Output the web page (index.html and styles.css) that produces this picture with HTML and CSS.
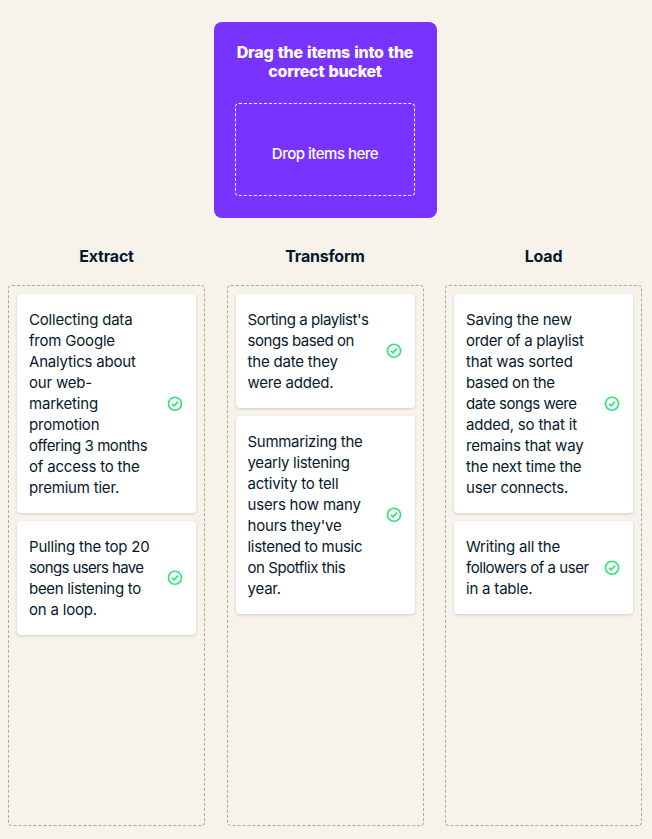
FILE: index.html
```html
<!DOCTYPE html>
<html lang="en">
<head>
<meta charset="utf-8">
<title>Drag and drop exercise</title>
<link rel="stylesheet" href="styles.css">
</head>
<body>
<svg class="sprite" aria-hidden="true">
  <symbol id="check" viewBox="0 0 16 16">
    <circle cx="8" cy="7.75" r="6.5" fill="none" stroke="currentColor" stroke-width="1.6"/>
    <path d="M5 7.8 7.1 9.8 11 5.7" fill="none" stroke="currentColor" stroke-width="1.8"/>
  </symbol>
</svg>
<main class="exercise">
  <section class="source">
    <h1 class="source-title">Drag the items into the<br>correct bucket</h1>
    <div class="source-drop">Drop items here</div>
  </section>
  <div class="buckets">
    <section class="bucket">
      <h2 class="bucket-title">Extract</h2>
      <div class="bucket-drop">
        <article class="card"><p>Collecting data<br>from Google<br>Analytics about<br>our web-<br>marketing<br>promotion<br><span class="tight">offering 3 months</span><br>of access to the<br>premium tier.</p><svg class="check"><use href="#check"/></svg></article>
        <article class="card"><p>Pulling the top 20<br><span class="tighter">songs users have</span><br><span class="snug">been listening to</span><br>on a loop.</p><svg class="check"><use href="#check"/></svg></article>
      </div>
    </section>
    <section class="bucket">
      <h2 class="bucket-title">Transform</h2>
      <div class="bucket-drop">
        <article class="card"><p><span class="tight">Sorting a playlist's</span><br><span class="tight">songs based on</span><br>the date they<br>were added.</p><svg class="check"><use href="#check"/></svg></article>
        <article class="card"><p><span class="snug">Summarizing the</span><br><span class="snug">yearly listening</span><br>activity to tell<br>users how many<br>hours they've<br><span class="snug">listened to music</span><br><span class="tight">on Spotflix this</span><br>year.</p><svg class="check"><use href="#check"/></svg></article>
      </div>
    </section>
    <section class="bucket">
      <h2 class="bucket-title">Load</h2>
      <div class="bucket-drop">
        <article class="card"><p>Saving the new<br><span class="snug">order of a playlist</span><br>that was sorted<br><span class="snug">based on the</span><br><span class="tight">date songs were</span><br>added, so that it<br>remains that way<br>the next time the<br>user connects.</p><svg class="check"><use href="#check"/></svg></article>
        <article class="card"><p>Writing all the<br><span class="tight">followers of a user</span><br>in a table.</p><svg class="check"><use href="#check"/></svg></article>
      </div>
    </section>
  </div>
</main>
</body>
</html>
```

FILE: styles.css
```css
* { box-sizing: border-box; }

body {
  margin: 0;
  background: #f7f3eb;
  color: #05192d;
  font-family: Inter, "Liberation Sans", sans-serif;
  font-size: 15px;
  line-height: 21px;
}

h1, h2, p { margin: 0; }

.sprite { display: none; }

.exercise {
  height: 839px;
  padding: 22px 10px 13px 8px;
  display: flex;
  flex-direction: column;
}

.source {
  width: 223px;
  height: 196px;
  margin-left: 206px;
  padding: 21px 22px 22px 21px;
  border-radius: 8px;
  background: #7933ff;
  color: #fff;
  text-align: center;
  display: flex;
  flex-direction: column;
}

.source-title {
  margin: 0 -10px 22px;
  font-size: 16px;
  font-weight: 800;
  line-height: 19px;
  letter-spacing: -0.25px;
  word-spacing: 1px;
}

.source-drop {
  flex: 1;
  display: grid;
  place-items: center;
  padding-top: 7px;
  border: 1px dashed #fff;
  border-radius: 4px;
  font-weight: 500;
  letter-spacing: -0.5px;
}

.buckets {
  flex: 1;
  display: grid;
  grid-template-columns: repeat(3, 197px);
  justify-content: space-between;
  padding-top: 28px;
}

.bucket {
  display: flex;
  flex-direction: column;
}

.bucket-title {
  height: 39px;
  font-size: 16px;
  font-weight: 700;
  line-height: 21px;
  text-align: center;
  letter-spacing: -0.2px;
}

.bucket-drop {
  flex: 1;
  display: flex;
  flex-direction: column;
  gap: 8px;
  padding: 8px;
  border: 1px dashed #aaa6a2;
  border-radius: 4px;
}

.card {
  display: flex;
  align-items: center;
  justify-content: space-between;
  padding: 15px 13px 15px 12px;
  border-radius: 4px;
  background: #fff;
  box-shadow: 0 1px 3px rgba(5, 25, 45, 0.18);
}

.card p {
  white-space: nowrap;
  letter-spacing: -0.2px;
}

.card .snug { letter-spacing: -0.3px; }
.card .tight { letter-spacing: -0.45px; }
.card .tighter { letter-spacing: -0.62px; }

.check {
  flex: none;
  width: 16px;
  height: 16px;
  color: #2ee579;
}
```
